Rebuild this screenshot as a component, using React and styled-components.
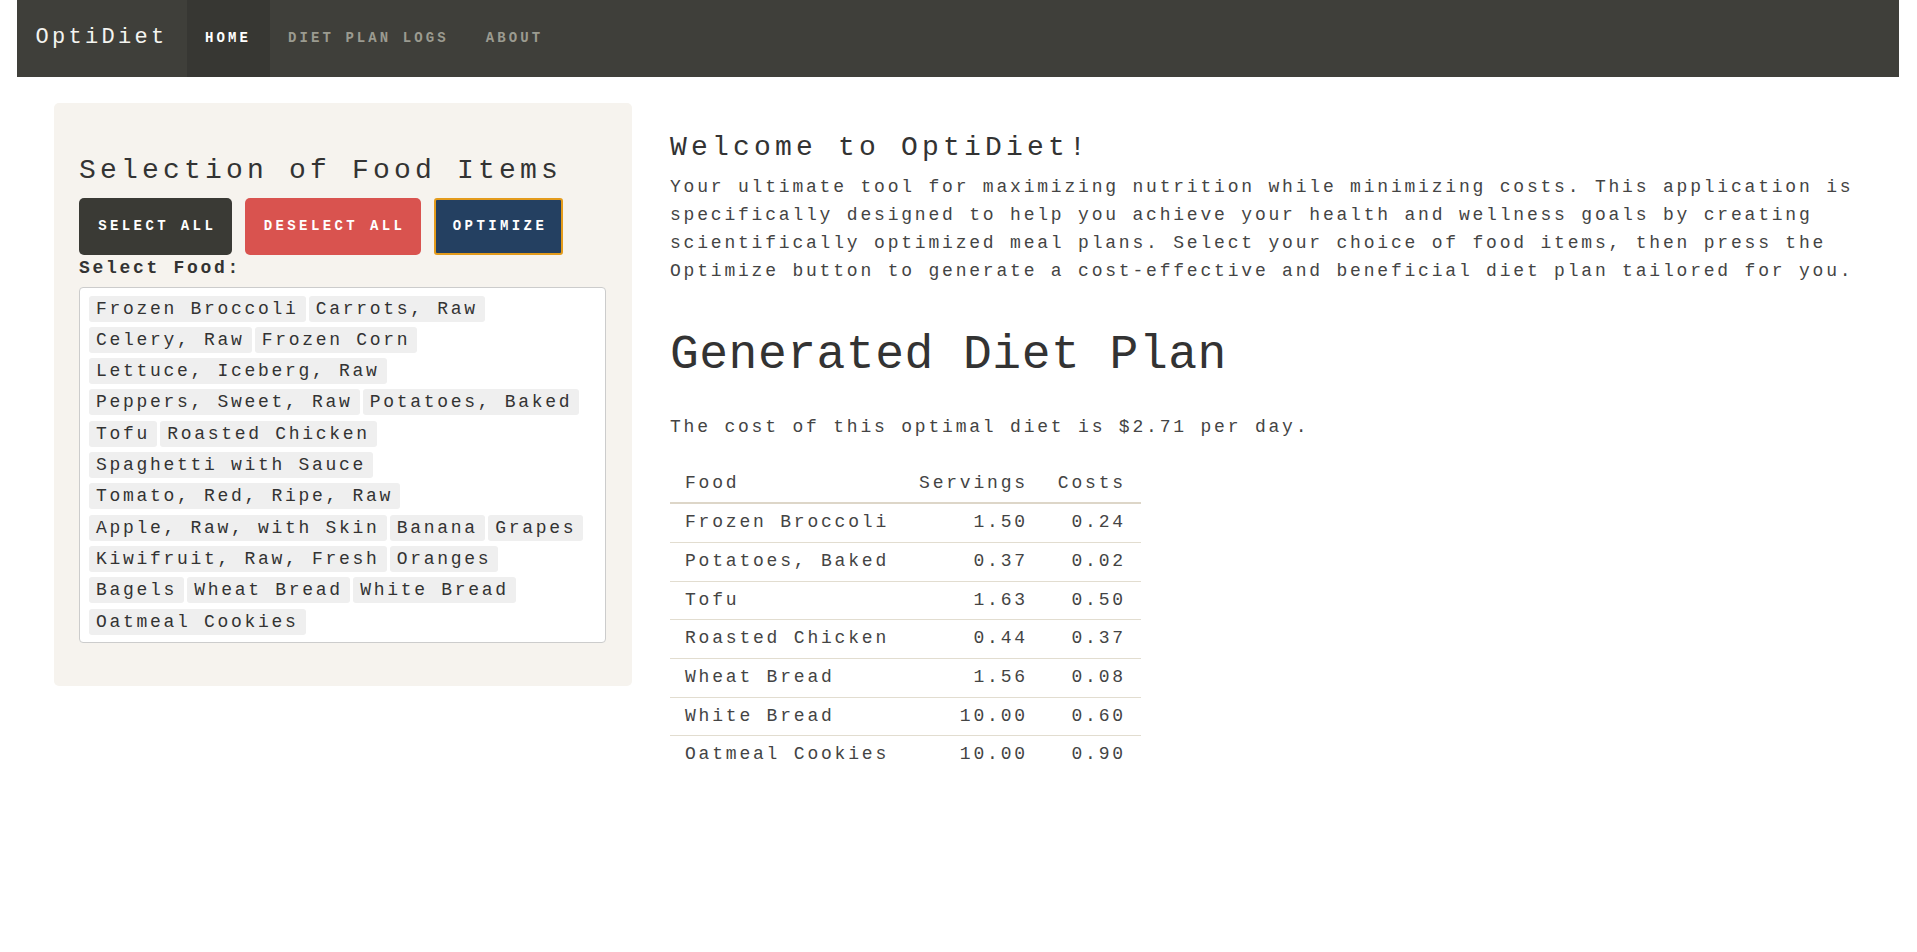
import React from 'react';
import styled, { createGlobalStyle } from 'styled-components';

const GlobalStyle = createGlobalStyle`
  html, body {
    margin: 0;
    padding: 0;
    background: #ffffff;
  }
  body {
    font-family: "Liberation Mono", "DejaVu Sans Mono", monospace;
    color: #333333;
  }
  * {
    box-sizing: border-box;
  }
`;

const Page = styled.div`
  padding: 0 18px 0 17px;
`;

const NavBar = styled.nav`
  display: flex;
  align-items: stretch;
  height: 77px;
  background: #3f3f3a;
`;

const Brand = styled.a`
  display: flex;
  align-items: center;
  padding: 0 19.5px 2px 18.5px;
  font-size: 22px;
  letter-spacing: 0.15em;
  color: #f4f4f0;
  text-decoration: none;
`;

const NavLinks = styled.ul`
  display: flex;
  margin: 0;
  padding: 0;
  list-style: none;
`;

const NavLink = styled.li`
  display: flex;
  align-items: center;
  padding: 0 19px 2px 18px;
  font-size: 14px;
  font-weight: 700;
  letter-spacing: 0.22em;
  color: ${(p) => (p.$active ? '#ffffff' : '#9b9b90')};
  background: ${(p) => (p.$active ? '#373733' : 'transparent')};
`;

const Main = styled.main`
  display: flex;
  align-items: flex-start;
  gap: 38px;
  padding: 26px 15px 0 37px;
`;

const Panel = styled.section`
  flex: 0 0 578px;
  padding: 51px 26px 43px 25px;
  background: #f6f3ee;
  border-radius: 5px;
`;

const PanelTitle = styled.h3`
  margin: 0 0 10px;
  font-size: 28px;
  font-weight: 400;
  line-height: 1.2;
  letter-spacing: 0.15em;
  color: #333333;
`;

const ButtonRow = styled.div`
  display: flex;
  gap: 12.5px;
`;

const Button = styled.button`
  height: 57px;
  padding: ${(p) => (p.$outline ? '0 13.8px 0 17.2px' : '0 15.8px 0 19.2px')};
  border: ${(p) => (p.$outline ? `2px solid ${p.$outline}` : 'none')};
  border-radius: ${(p) => (p.$outline ? '3px' : '5px')};
  background: ${(p) => p.$bg};
  color: #ffffff;
  font-family: inherit;
  font-size: 14px;
  font-weight: 700;
  letter-spacing: 3.4px;
  cursor: pointer;
`;

const Label = styled.label`
  display: block;
  margin: 0 0 5px;
  font-size: 18px;
  font-weight: 700;
  line-height: 27px;
  letter-spacing: 0.15em;
  color: #333333;
`;

const FoodBox = styled.div`
  display: flex;
  flex-wrap: wrap;
  align-content: flex-start;
  gap: 5.3px 3.3px;
  padding: 8px 16px 7px 9px;
  background: #ffffff;
  border: 1px solid #cccccc;
  border-radius: 4px;
`;

const FoodTag = styled.span`
  padding: 0 7px;
  font-size: 18px;
  line-height: 26px;
  letter-spacing: 0.15em;
  white-space: nowrap;
  color: #333333;
  background: #efefef;
  border-radius: 3px;
`;

const Content = styled.section`
  flex: 1;
  padding-top: 27.5px;
`;

const Welcome = styled.h1`
  margin: 0 0 9px;
  font-size: 28px;
  font-weight: 400;
  line-height: 1.2;
  letter-spacing: 0.15em;
  color: #333333;
`;

const Intro = styled.p`
  margin: 0;
  font-size: 18px;
  line-height: 28px;
  letter-spacing: 2.8px;
  color: #444444;
`;

const PlanTitle = styled.h2`
  margin: 42px 0 28.5px;
  font-size: 48px;
  font-weight: 400;
  line-height: 1.2;
  letter-spacing: 0.5px;
  color: #333333;
`;

const CostLine = styled.p`
  margin: 0 0 24px;
  font-size: 18px;
  line-height: 28px;
  letter-spacing: 2.8px;
  color: #444444;
`;

const PlanTable = styled.table`
  border-collapse: collapse;
  font-size: 18px;
  letter-spacing: 2.8px;
  color: #444444;
`;

const HeadCell = styled.th`
  padding: 5px 15px;
  line-height: 27px;
  font-weight: 400;
  text-align: ${(p) => (p.$right ? 'right' : 'left')};
  border-bottom: 2px solid #ddd6c8;
`;

const Row = styled.tr`
  & + & td {
    border-top: 1px solid #e2ddd0;
  }
`;

const Cell = styled.td`
  padding: 5px 15px;
  line-height: 27.7px;
  text-align: ${(p) => (p.$right ? 'right' : 'left')};
`;

const foods = [
  'Frozen Broccoli',
  'Carrots, Raw',
  'Celery, Raw',
  'Frozen Corn',
  'Lettuce, Iceberg, Raw',
  'Peppers, Sweet, Raw',
  'Potatoes, Baked',
  'Tofu',
  'Roasted Chicken',
  'Spaghetti with Sauce',
  'Tomato, Red, Ripe, Raw',
  'Apple, Raw, with Skin',
  'Banana',
  'Grapes',
  'Kiwifruit, Raw, Fresh',
  'Oranges',
  'Bagels',
  'Wheat Bread',
  'White Bread',
  'Oatmeal Cookies',
];

const plan = [
  { food: 'Frozen Broccoli', servings: '1.50', cost: '0.24' },
  { food: 'Potatoes, Baked', servings: '0.37', cost: '0.02' },
  { food: 'Tofu', servings: '1.63', cost: '0.50' },
  { food: 'Roasted Chicken', servings: '0.44', cost: '0.37' },
  { food: 'Wheat Bread', servings: '1.56', cost: '0.08' },
  { food: 'White Bread', servings: '10.00', cost: '0.60' },
  { food: 'Oatmeal Cookies', servings: '10.00', cost: '0.90' },
];

const App = () => {
  return (
    <Page>
      <GlobalStyle />
      <NavBar>
        <Brand href="#">OptiDiet</Brand>
        <NavLinks>
          <NavLink $active>HOME</NavLink>
          <NavLink>DIET PLAN LOGS</NavLink>
          <NavLink>ABOUT</NavLink>
        </NavLinks>
      </NavBar>

      <Main>
        <Panel>
          <PanelTitle>Selection of Food Items</PanelTitle>
          <ButtonRow>
            <Button $bg="#3a3a35">SELECT ALL</Button>
            <Button $bg="#d9534f">DESELECT ALL</Button>
            <Button $bg="#244061" $outline="#e39b1c">OPTIMIZE</Button>
          </ButtonRow>
          <Label>Select Food:</Label>
          <FoodBox>
            {foods.map((food) => (
              <FoodTag key={food}>{food}</FoodTag>
            ))}
          </FoodBox>
        </Panel>

        <Content>
          <Welcome>Welcome to OptiDiet!</Welcome>
          <Intro>
            Your ultimate tool for maximizing nutrition while minimizing costs. This application is
            specifically designed to help you achieve your health and wellness goals by creating
            scientifically optimized meal plans. Select your choice of food items, then press the
            Optimize button to generate a cost-effective and beneficial diet plan tailored for you.
          </Intro>

          <PlanTitle>Generated Diet Plan</PlanTitle>
          <CostLine>The cost of this optimal diet is $2.71 per day.</CostLine>

          <PlanTable>
            <thead>
              <tr>
                <HeadCell>Food</HeadCell>
                <HeadCell $right>Servings</HeadCell>
                <HeadCell $right>Costs</HeadCell>
              </tr>
            </thead>
            <tbody>
              {plan.map((item) => (
                <Row key={item.food}>
                  <Cell>{item.food}</Cell>
                  <Cell $right>{item.servings}</Cell>
                  <Cell $right>{item.cost}</Cell>
                </Row>
              ))}
            </tbody>
          </PlanTable>
        </Content>
      </Main>
    </Page>
  );
};

export default App;
